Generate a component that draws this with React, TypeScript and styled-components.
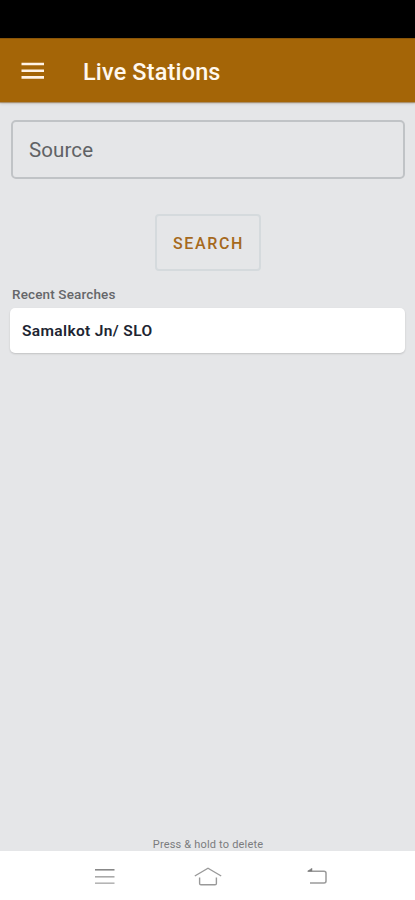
import React from "react";
import styled, { createGlobalStyle } from "styled-components";

const GlobalStyle = createGlobalStyle`
  * { box-sizing: border-box; }
  body { margin: 0; font-family: Roboto, sans-serif; background: #e5e6e8; }
  button { font-family: inherit; }
`;

const Screen = styled.div`
  height: 900px;
  display: flex;
  flex-direction: column;
  background: #e5e6e8;
`;

const StatusBar = styled.div`
  height: 38px;
  flex: none;
  background: #000;
`;

const AppBar = styled.header`
  height: 64px;
  flex: none;
  display: flex;
  align-items: center;
  padding: 4px 21px 0;
  gap: 39px;
  background: #a46507;
  border-top: 1px solid #8a5508;
  box-shadow: 0 1px 1px rgba(130, 80, 10, 0.5), 0 2px 3px rgba(0, 0, 0, 0.1);
`;

const IconButton = styled.button`
  display: flex;
  padding: 0;
  border: 0;
  background: none;
`;

const MenuButton = styled(IconButton)`
  margin-bottom: 4px;
`;

const Title = styled.h1`
  margin: 0 0 2px;
  color: #fff8ee;
  font-size: 23.5px;
  line-height: 28px;
  font-weight: 500;
  letter-spacing: 0.15px;
  white-space: nowrap;
`;

const Content = styled.main`
  flex: 1;
  display: flex;
  flex-direction: column;
  padding: 18px 10px 0;
`;

const SourceField = styled.div`
  height: 59px;
  margin: 0 0 0 1px;
  padding: 1px 16px 0;
  display: flex;
  align-items: center;
  border: 2px solid #c0c3c6;
  border-radius: 5px;
  color: #606265;
  font-size: 20.5px;
  letter-spacing: 0.1px;
`;

const SearchButton = styled.button`
  align-self: center;
  width: 106px;
  height: 57px;
  margin-top: 35px;
  padding: 1px 0 0 2px;
  border: 2px solid #d5dadd;
  border-radius: 4px;
  background: transparent;
  color: #a5691c;
  font-size: 16px;
  font-weight: 500;
  letter-spacing: 1.65px;
`;

const SectionLabel = styled.h2`
  margin: 15px 2px 5px;
  color: #65666a;
  font-size: 13.5px;
  line-height: 17px;
  font-weight: 500;
  letter-spacing: 0.14px;
`;

const RecentCard = styled.div`
  height: 45px;
  display: flex;
  align-items: center;
  padding: 1px 12px 0;
  border-radius: 5px;
  background: #fff;
  box-shadow: 0 1px 2px rgba(0, 0, 0, 0.16);
  color: #202431;
  font-size: 15.5px;
  font-weight: 600;
  letter-spacing: 0.36px;
`;

const Hint = styled.p`
  margin: auto 0 -1px 1px;
  color: #7b7c7e;
  text-align: center;
  font-size: 11px;
  line-height: 14px;
  letter-spacing: 0.18px;
`;

const NavigationBar = styled.nav`
  height: 49px;
  flex: none;
  display: grid;
  grid-template-columns: 28px 30px 30px;
  align-items: center;
  justify-content: start;
  column-gap: 75px;
  padding: 2px 0 0 90px;
  background: #fff;
`;

function App() {
  return (
    <Screen>
      <GlobalStyle />
      <StatusBar />
      <AppBar>
        <MenuButton aria-label="Open menu">
          <svg width="23" height="18" viewBox="0 0 23 18" stroke="#fff3e6" strokeWidth="2.6">
            <path d="M0.5 2H23M0.5 8.7H23M0.5 15.4H23" />
          </svg>
        </MenuButton>
        <Title>Live Stations</Title>
      </AppBar>
      <Content>
        <SourceField>Source</SourceField>
        <SearchButton>SEARCH</SearchButton>
        <SectionLabel>Recent Searches</SectionLabel>
        <RecentCard>Samalkot Jn/ SLO</RecentCard>
        <Hint>Press &amp; hold to delete</Hint>
      </Content>
      <NavigationBar>
        <IconButton aria-label="Recent apps">
          <svg width="28" height="24" viewBox="0 0 28 24" fill="none" strokeWidth="1.6">
            <path d="M5 4.8H24.5" stroke="#888" />
            <path d="M5 11.8H24.5" stroke="#aaa" />
            <path d="M5 18.2H24.5" stroke="#b5b5b5" />
          </svg>
        </IconButton>
        <IconButton aria-label="Home">
          <svg width="30" height="24" viewBox="0 0 30 24" fill="none" stroke="#999" strokeWidth="1.4">
            <path d="M1.8 11L15 3.2L28.2 11M6.6 12.5V18.5Q6.6 19.7 8 19.7H22Q23.4 19.7 23.4 18.5V12.5" />
          </svg>
        </IconButton>
        <IconButton aria-label="Back">
          <svg width="30" height="24" viewBox="0 0 30 24" fill="none" stroke="#9a9a9a" strokeWidth="1.5">
            <path d="M10 6.2H26Q28 6.2 28 8.2V16Q28 18 26 18H12" />
            <path d="M9.5 6.2L14 3.2V6.2Z" fill="#777" stroke="#888" strokeWidth="0.5" />
          </svg>
        </IconButton>
      </NavigationBar>
    </Screen>
  );
}

export default App;
